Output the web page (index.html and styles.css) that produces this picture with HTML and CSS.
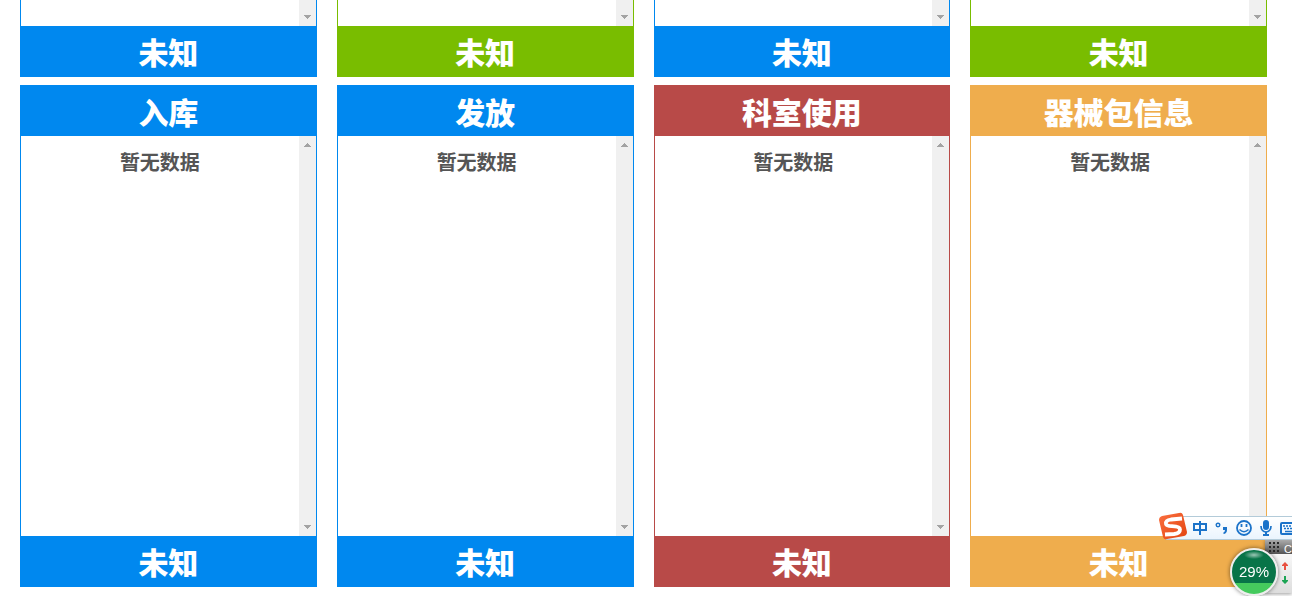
FILE: index.html
```html
<!DOCTYPE html>
<html lang="zh-CN">
<head>
<meta charset="utf-8">
<title>追溯信息</title>
<link rel="stylesheet" href="styles.css">
</head>
<body>
<svg class="defs" aria-hidden="true">
  <symbol id="up" viewBox="0 0 7 4"><path d="M3 0h1v1h1v1h1v1h1v1H0V3h1V2h1V1h1z" fill="#a3a3a3"/></symbol>
  <symbol id="down" viewBox="0 0 7 4"><path d="M3 4h1V3h1V2h1V1h1V0H0v1h1v1h1v1h1z" fill="#a3a3a3"/></symbol>
</svg>
<main class="board">
  <section class="panel blue tail"><div class="body"><div class="content"></div><div class="track"><svg class="arrow"><use href="#down"/></svg></div></div><footer class="bar foot">未知</footer></section>
  <section class="panel green tail"><div class="body"><div class="content"></div><div class="track"><svg class="arrow"><use href="#down"/></svg></div></div><footer class="bar foot">未知</footer></section>
  <section class="panel blue tail"><div class="body"><div class="content"></div><div class="track"><svg class="arrow"><use href="#down"/></svg></div></div><footer class="bar foot">未知</footer></section>
  <section class="panel green tail"><div class="body"><div class="content"></div><div class="track"><svg class="arrow"><use href="#down"/></svg></div></div><footer class="bar foot">未知</footer></section>

  <section class="panel blue"><h2 class="bar">入库</h2><div class="body"><p class="content">暂无数据</p><div class="track"><svg class="arrow"><use href="#up"/></svg><svg class="arrow"><use href="#down"/></svg></div></div><footer class="bar foot">未知</footer></section>
  <section class="panel blue"><h2 class="bar">发放</h2><div class="body"><p class="content">暂无数据</p><div class="track"><svg class="arrow"><use href="#up"/></svg><svg class="arrow"><use href="#down"/></svg></div></div><footer class="bar foot">未知</footer></section>
  <section class="panel red"><h2 class="bar">科室使用</h2><div class="body"><p class="content">暂无数据</p><div class="track"><svg class="arrow"><use href="#up"/></svg><svg class="arrow"><use href="#down"/></svg></div></div><footer class="bar foot">未知</footer></section>
  <section class="panel orange"><h2 class="bar">器械包信息</h2><div class="body"><p class="content">暂无数据</p><div class="track"><svg class="arrow"><use href="#up"/></svg><svg class="arrow"><use href="#down"/></svg></div></div><footer class="bar foot">未知</footer></section>
</main>

<aside class="monitor">
  <div class="monitor-head"><svg class="grip" viewBox="0 0 10 10"><path d="M0 0h2v2H0zM4 0h2v2H4zM8 0h2v2H8zM0 4h2v2H0zM4 4h2v2H4zM8 4h2v2H8zM0 8h2v2H0zM4 8h2v2H4zM8 8h2v2H8z" fill="#2a2a2a"/></svg><span>C</span></div>
  <div class="monitor-body">
    <svg class="flow" viewBox="0 0 8 8"><path d="M4 0l3 3v1H5v4H3V4H1V3z" fill="#e8503f"/></svg>
    <svg class="flow" viewBox="0 0 8 8"><path d="M4 8l3-3V4H5V0H3v4H1v1z" fill="#1ba454"/></svg>
  </div>
</aside>
<div class="gauge"><span>29%</span></div>

<div class="ime">
  <svg class="logo" viewBox="0 0 28 28"><defs><linearGradient id="lg" x1="0" y1="0" x2="1" y2="1"><stop offset="0" stop-color="#fb7040"/><stop offset="1" stop-color="#e2440f"/></linearGradient></defs><path d="M3 4L20 1q3-1 4 2l4 17q0 3-3 4L8 27q-3 1-4-2L0 8q0-3 3-4z" fill="url(#lg)"/><path d="M23 6.500L12 7.500Q6 8.500 7 12q.5 2 6 2.200 8 .3 8 3.300 0 4-6 4.500L6 22.500" fill="none" stroke="#fff" stroke-width="3.800"/></svg>
  <svg class="tools" viewBox="0 0 105 22" fill="none" stroke="#1b73c9" stroke-width="2">
    <path d="M7 7h12v6H7zM13 4v14"/>
    <circle cx="31" cy="8" r="1.800" stroke-width="1.400"/><path d="M36 10h4v3q0 3-3 4l-1-1q2-1 2-3h-2z" fill="#1b73c9" stroke="none"/>
    <circle cx="57" cy="11" r="7" stroke-width="1.800"/><path d="M54.500 7v3M59.500 7v3" stroke-width="1.800"/><path d="M52.500 12.500q4.500 4.500 9 0" stroke-width="1.500"/>
    <rect x="76" y="3" width="6" height="10" rx="3" fill="#1b73c9" stroke="none"/><path d="M74 9c0 8 10 8 10 0" stroke-width="1.700"/><path d="M79 15v3M76 18h6"/>
    <rect x="94" y="6" width="17" height="11" rx="1"/><path d="M96 9h10M97 11.500h10" stroke-width="1.700" stroke-dasharray="2 1"/><path d="M98 14.500h10" stroke-width="1.500"/>
  </svg>
</div>
</body>
</html>
```
FILE: styles.css
```css
* { box-sizing: border-box; }
body { margin: 0; background: #fff; overflow: hidden; font-family: "Noto Sans CJK SC", sans-serif; }
.defs { position: absolute; width: 0; height: 0; }
.board { display: grid; grid-template-columns: repeat(4, 1fr); gap: 8px 20px; padding: 0 25px 9px 20px; }
.panel { --tone: #0088ef; }
.green { --tone: #79bd00; }
.red { --tone: #b84a48; }
.orange { --tone: #efad4d; }
.bar { margin: 0; padding: 4px 0 3px; background: var(--tone); color: #fff; font-size: 30px; line-height: 44px; font-weight: 900; text-align: center; }
.foot { padding: 3px 0 4px; }
.body { display: flex; height: 400px; border: solid var(--tone); border-width: 0 1px; }
.tail .body { height: 26px; }
.content { flex: 1; margin: 0; padding-top: 11px; color: #555; font-size: 20px; line-height: 30px; font-weight: 700; text-align: center; }
.track { display: flex; flex-direction: column; justify-content: space-between; align-items: center; width: 17px; padding: 7px 0; background: #f0f0f0; }
.tail .track { justify-content: flex-end; }
.arrow { width: 7px; height: 4px; }

.ime { position: fixed; right: 0; bottom: 56px; display: flex; width: 126px; height: 24px; background: linear-gradient(#fff, #eaf4fd); border: solid #b3cbd9; border-width: 1px 0; }
.logo { position: absolute; left: -7px; bottom: -1px; width: 28px; height: 28px; }
.tools { width: 105px; height: 22px; margin-left: 21px; }

.monitor { position: fixed; right: 0; bottom: 3px; width: 27px; box-shadow: 0 1px 4px #0006; }
.monitor-head { display: flex; align-items: flex-end; gap: 5px; height: 14px; padding-left: 4px; background: linear-gradient(#aaa, #555); color: #fff; font: 11px/9px "Liberation Sans", sans-serif; }
.grip { flex: none; width: 10px; height: 10px; margin-bottom: 2px; }
.monitor-body { display: flex; flex-direction: column; align-items: flex-end; gap: 6px; height: 39px; padding: 8px 3px 0 0; background: linear-gradient(#f8f8f8, #ddd); }
.flow { width: 8px; height: 8px; }
.gauge { position: fixed; right: 14px; bottom: 0; display: flex; align-items: center; justify-content: center; width: 48px; height: 48px; border: 2px solid #eee; border-radius: 50%; background: radial-gradient(ellipse 10px 4px at 50% 5px, #ffffff99, transparent), linear-gradient(#087448 0 76%, #45ca5d 76%); box-shadow: 0 0 4px #0008; color: #fff; font: 15px/20px "Liberation Sans", sans-serif; }
```
